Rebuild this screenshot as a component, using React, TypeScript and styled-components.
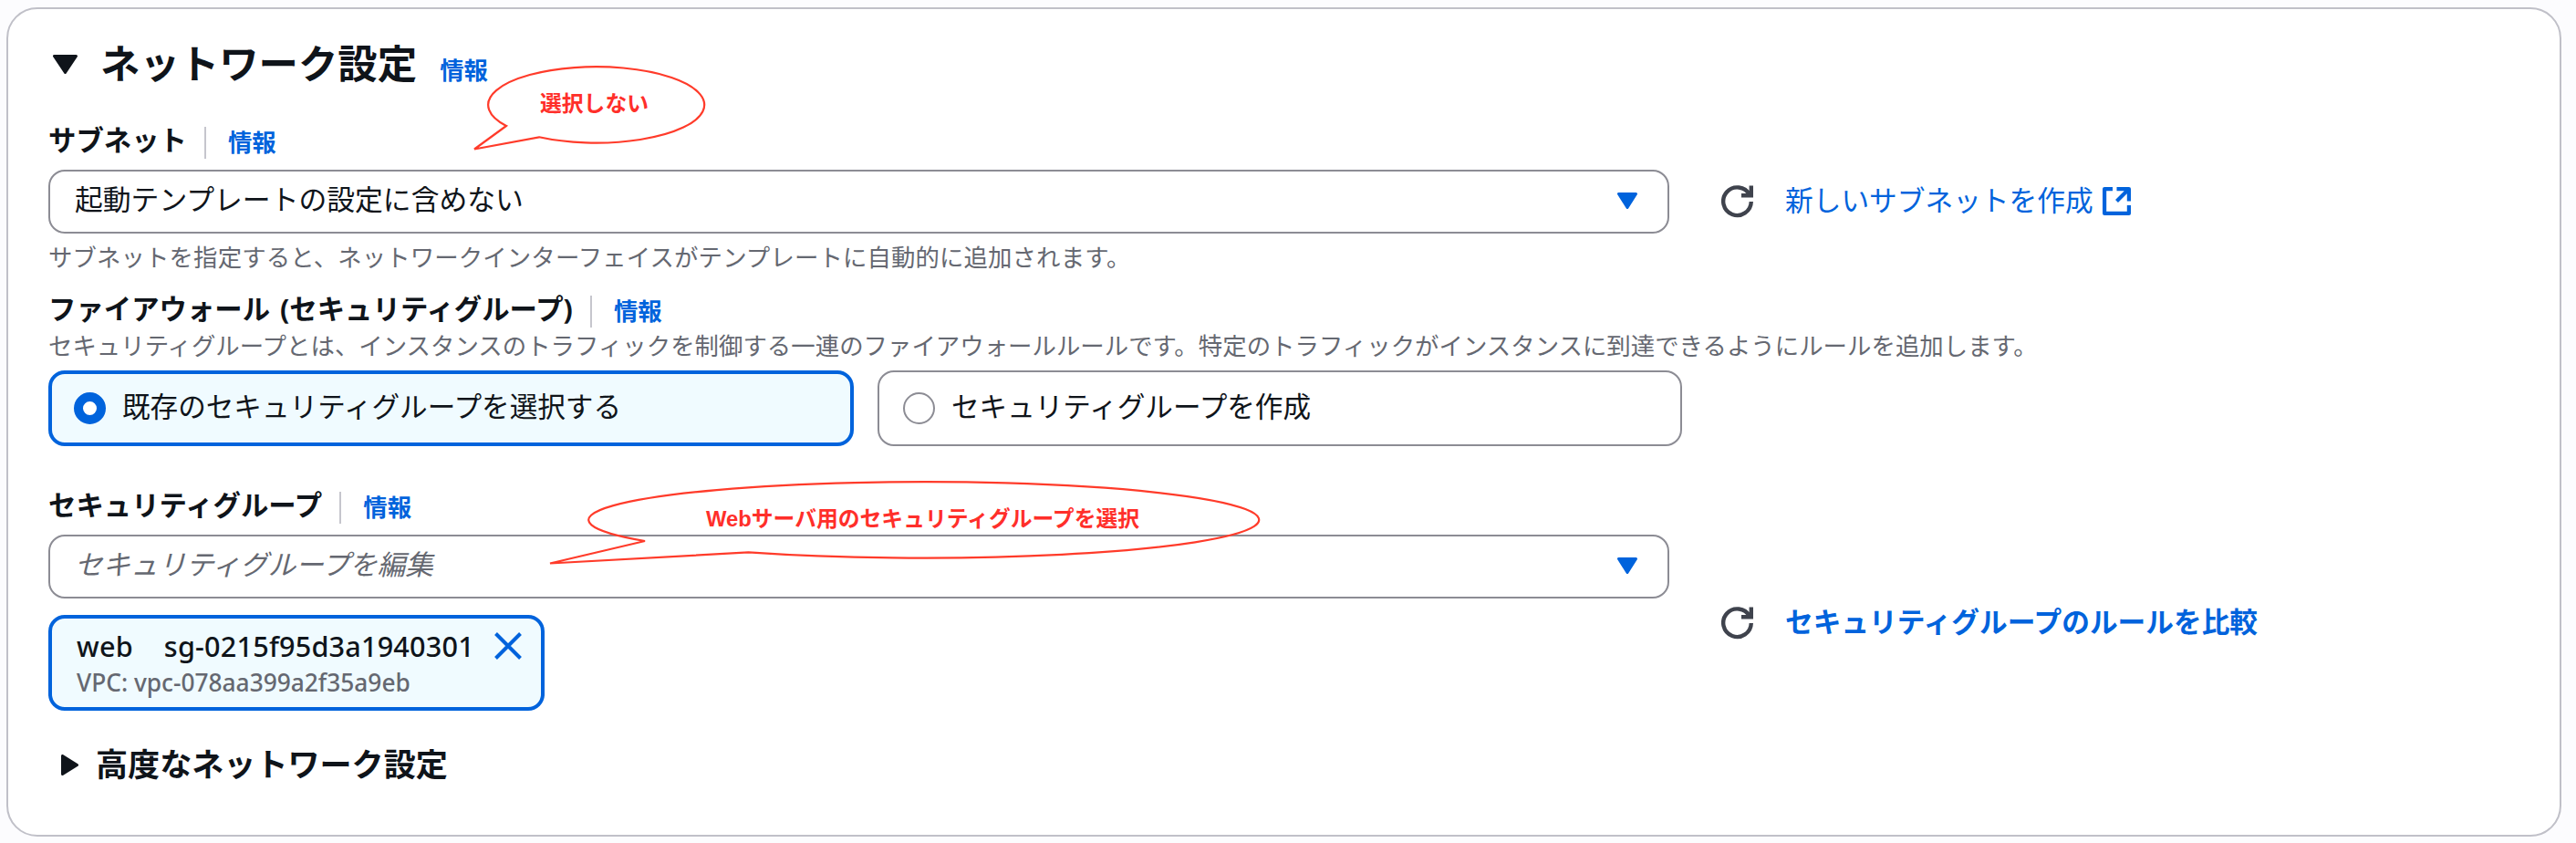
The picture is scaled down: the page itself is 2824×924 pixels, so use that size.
import React from "react";
import styled, { createGlobalStyle } from "styled-components";

const Global = createGlobalStyle`
  *{box-sizing:border-box}
  body{margin:0;background:#fcfcfe;color:#0f141a;font-family:"Open Sans","Noto Sans CJK JP",sans-serif;font-size:30.6px;overflow:hidden}
`;
const Page = styled.div`padding:8px 16px 0 7px;height:924px;position:relative;`;
const Panel = styled.section`
  height:909px;border:2px solid #c0c0c8;border-radius:34px;background:#fff;padding:0 44px;display:flex;flex-direction:column;
`;
const Line = styled.div<{ $h: number; $top?: number }>`
  display:flex;align-items:center;flex:none;height:${p => p.$h}px;margin-top:${p => p.$top ?? 0}px;white-space:nowrap;
`;
const Title = styled.h2`margin:0 0 0 25px;font-size:43.4px;line-height:60px;font-weight:700;`;
const Info = styled.a`color:#0063dc;font-weight:700;font-size:26.4px;line-height:36px;`;
const TitleInfo = styled(Info)`margin-left:25px;padding-top:14px;`;
const Label = styled.label`font-weight:700;font-size:30.4px;line-height:40px;padding-bottom:4px;word-spacing:3px;`;
const Divider = styled.span`width:2px;height:35px;background:#c6c6cd;margin:0 24px 0 19px;`;
const Hint = styled.p<{ $track: number }>`margin:0;color:#656871;font-size:26.4px;line-height:36px;letter-spacing:${p => p.$track}px;`;
const Select = styled.div<{ $placeholder?: boolean }>`
  width:1777px;height:70px;border:2px solid #8c8c94;border-radius:18px;display:flex;align-items:center;justify-content:space-between;
  padding:0 33px 2px 27px;font-size:${p => (p.$placeholder ? 30.5 : 30.8)}px;
  font-style:${p => (p.$placeholder ? "italic" : "normal")};color:${p => (p.$placeholder ? "#656871" : "#0f141a")};
`;
const Raised = styled.span`line-height:40px;padding-bottom:4px;`;
const Aside = styled.div`display:flex;align-items:center;margin-left:57px;`;
const Link = styled.a<{ $bold?: boolean }>`
  color:#0063dc;font-size:30.7px;font-weight:${p => (p.$bold ? 700 : 400)};margin-left:34px;line-height:40px;padding-bottom:4px;white-space:nowrap;
`;
const Tiles = styled.div`display:flex;gap:26px;margin-top:12px;`;
const Tile = styled.div<{ $on?: boolean }>`
  width:${p => (p.$on ? 883 : 882)}px;height:83px;border-radius:18px;display:flex;align-items:center;padding:0 0 1px ${p => (p.$on ? 24 : 26)}px;gap:18px;
  border:${p => (p.$on ? "4px solid #0063dc" : "2px solid #8c8c94")};background:${p => (p.$on ? "#f0fbff" : "#fff")};
`;
const Radio = styled.span<{ $on?: boolean }>`
  width:35px;height:35px;border-radius:50%;background:#fff;border:${p => (p.$on ? "10px solid #0063dc" : "2px solid #8c8c94")};
`;
const Token = styled.div`
  width:544px;height:105px;border:4px solid #0063dc;border-radius:18px;background:#f0fbff;margin-top:18px;padding:8px 21px 0 27px;
  display:flex;justify-content:space-between;font-family:"Noto Sans","Open Sans",sans-serif;font-weight:500;
`;
const TokenText = styled.div`display:flex;flex-direction:column;`;
const TokenName = styled.span`line-height:44px;display:flex;gap:34px;letter-spacing:0.2px;`;
const TokenMeta = styled.span`color:#656871;font-size:26.3px;line-height:36px;`;
const SubTitle = styled.h3`margin:0 0 0 19px;font-size:35.1px;line-height:46px;padding-bottom:2px;font-weight:700;`;
const Column = styled.div`width:1777px;`;
const GroupRow = styled.div`display:flex;align-items:center;height:193px;margin-top:8px;`;
const Callouts = styled.svg`position:absolute;left:0;top:0;`;
const Note = styled.span<{ $x: number; $y: number }>`
  position:absolute;left:${p => p.$x}px;top:${p => p.$y}px;font:700 23.8px/32px "Liberation Sans","Noto Sans CJK JP",sans-serif;color:#ff2f2a;white-space:nowrap;
`;
const TitleCaret = styled.svg`margin-left:5px;`;
const SideCaret = styled.svg`margin-left:14px;`;
const CloseIcon = styled.svg`margin-top:7px;`;
const ExternalIcon = styled.svg`margin:0 0 1px 10px;`;

const DownCaret = () => (
  <svg width="22" height="18" viewBox="0 0 22 18">
    <path d="M1.5 1.5H20.500L11 16.500Z" fill="#0063dc" stroke="#0063dc" strokeWidth="3" strokeLinejoin="round" />
  </svg>
);
const Refresh = () => (
  <svg width="36" height="36" viewBox="0 0 36 36" fill="none" stroke="#3f434d" strokeWidth="4.4">
    <path d="M32.800 18A15.300 15.300 0 1 1 31 10.500" />
    <path d="M32.800 0.500V11.200H22" />
  </svg>
);
const External = () => (
  <ExternalIcon width="31" height="31" viewBox="0 0 31 31" fill="none" stroke="#0063dc" strokeWidth="4.2" strokeLinejoin="round">
    <path d="M11 2.100H2.100V28.900H28.900V20" />
    <path d="M15.500 2.100H28.900V15.500M28.500 2.500L15.500 15.500" />
  </ExternalIcon>
);

export default function App() {
  return (
    <Page>
      <Global />
      <Panel>
        <Line $h={60} $top={30}>
          <TitleCaret width="27" height="21" viewBox="0 0 27 21">
            <path d="M1.500 1.500H25.500L13.500 19.500Z" fill="#0f141a" stroke="#0f141a" strokeWidth="3" strokeLinejoin="round" />
          </TitleCaret>
          <Title>ネットワーク設定</Title>
          <TitleInfo>情報</TitleInfo>
        </Line>
        <Line $h={44} $top={34}>
          <Label>サブネット</Label><Divider /><Info>情報</Info>
        </Line>
        <Line $h={70} $top={8}>
          <Select><Raised>起動テンプレートの設定に含めない</Raised><DownCaret /></Select>
          <Aside><Refresh /><Link>新しいサブネットを作成</Link><External /></Aside>
        </Line>
        <Line $h={36} $top={8}>
          <Hint $track={0.13}>サブネットを指定すると、ネットワークインターフェイスがテンプレートに自動的に追加されます。</Hint>
        </Line>
        <Line $h={44} $top={19}>
          <Label>ファイアウォール (セキュリティグループ)</Label><Divider /><Info>情報</Info>
        </Line>
        <Line $h={31}>
          <Hint $track={0.03}>セキュリティグループとは、インスタンスのトラフィックを制御する一連のファイアウォールルールです。特定のトラフィックがインスタンスに到達できるようにルールを追加します。</Hint>
        </Line>
        <Tiles>
          <Tile $on><Radio $on /><Raised>既存のセキュリティグループを選択する</Raised></Tile>
          <Tile><Radio /><Raised>セキュリティグループを作成</Raised></Tile>
        </Tiles>
        <Line $h={44} $top={45}>
          <Label>セキュリティグループ</Label><Divider /><Info>情報</Info>
        </Line>
        <GroupRow>
          <Column>
            <Select $placeholder><Raised>セキュリティグループを編集</Raised><DownCaret /></Select>
            <Token>
              <TokenText>
                <TokenName><span>web</span><span>sg-0215f95d3a1940301</span></TokenName>
                <TokenMeta>VPC: vpc-078aa399a2f35a9eb</TokenMeta>
              </TokenText>
              <CloseIcon width="30" height="30" viewBox="0 0 30 30" stroke="#0063dc" strokeWidth="4">
                <path d="M1.500 1.500L28.500 28.500M28.500 1.500L1.500 28.500" />
              </CloseIcon>
            </Token>
          </Column>
          <Aside><Refresh /><Link $bold>セキュリティグループのルールを比較</Link></Aside>
        </GroupRow>
        <Line $h={48} $top={35}>
          <SideCaret width="19" height="23" viewBox="0 0 19 23">
            <path d="M1.500 1.500V21.500L17.500 11.500Z" fill="#0f141a" stroke="#0f141a" strokeWidth="3" strokeLinejoin="round" />
          </SideCaret>
          <SubTitle>高度なネットワーク設定</SubTitle>
        </Line>
      </Panel>
      <Callouts width="2824" height="924" fill="none" stroke="#ff3b2a" strokeWidth="2.2">
        <path d="M555 138L520 163.500L591 150.300A118.500 41.700 0 1 0 555 138Z" />
        <path d="M707 593L603 617.500L820.500 605.400A367.500 41.700 0 1 0 707 593Z" />
      </Callouts>
      <Note $x={592} $y={98}>選択しない</Note>
      <Note $x={774} $y={553}>Webサーバ用のセキュリティグループを選択</Note>
    </Page>
  );
}
